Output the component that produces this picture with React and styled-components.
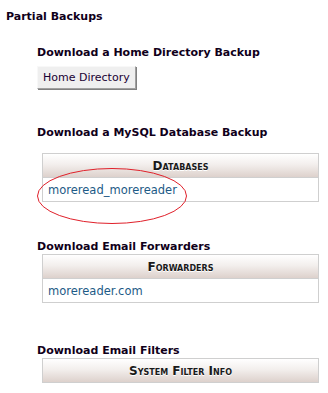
import React from "react";
import styled, { createGlobalStyle } from "styled-components";

const GlobalStyle = createGlobalStyle`
  body {
    margin: 0;
    background: #fff;
    font-family: "DejaVu Sans", Verdana, sans-serif;
    font-size: 11px;
    color: #111;
  }
`;

const Page = styled.div`
  position: relative;
  width: 328px;
  height: 393px;
  overflow: hidden;
  padding: 10px 6px 0;
  box-sizing: border-box;
`;

const Title = styled.h2`
  margin: 0;
  font-size: 11px;
  line-height: 13px;
  font-weight: bold;
  color: #10001a;
`;

const Section = styled.div`
  position: relative;
  margin-left: 31px;
  margin-top: ${(p) => p.$top}px;
`;

const Heading = styled.h3`
  margin: 0;
  font-size: 11px;
  line-height: 13px;
  font-weight: bold;
  color: #10001a;
`;

const Button = styled.button`
  margin-top: 7px;
  height: 23px;
  padding: 0 5px;
  font-family: "DejaVu Sans", Verdana, sans-serif;
  font-size: 11px;
  color: #1a0033;
  background: #efefef;
  border: 1px solid;
  border-color: #f8f8f8 #a0a0a0 #a0a0a0 #f8f8f8;
  box-shadow: 1px 1px 0 #808080;
`;

const Table = styled.div`
  margin: ${(p) => p.$gap || 1}px 0 0 5px;
  width: 277px;
  border: 1px solid #cfcfcf;
  box-sizing: border-box;
`;

const Header = styled.div`
  height: 23px;
  display: flex;
  align-items: center;
  justify-content: center;
  background: linear-gradient(#ffffff, #f3efed 45%, #ddd1cc);
  font-weight: bold;
  font-variant: small-caps;
  font-size: 12px;
  color: #1a1a1a;
  text-shadow: 0 1px 0 #fff;
`;

const Row = styled.div`
  height: 23px;
  display: flex;
  align-items: center;
  padding-left: 5px;
  border-top: 1px solid #cfcfcf;
`;

const Link = styled.a`
  color: #1d5a86;
  text-decoration: none;
  font-size: 11.5px;
`;

const Circle = styled.svg`
  position: absolute;
  left: -1px;
  top: 41px;
  pointer-events: none;
`;

export default function App() {
  return (
    <Page>
      <GlobalStyle />
      <Title>Partial Backups</Title>

      <Section $top={23}>
        <Heading>Download a Home Directory Backup</Heading>
        <Button type="button">Home Directory</Button>
      </Section>

      <Section $top={37}>
        <Heading>Download a MySQL Database Backup</Heading>
        <Table $gap={14}>
          <Header>Databases</Header>
          <Row>
            <Link href="#">moreread_morereader</Link>
          </Row>
        </Table>
        <Circle width="154" height="60" viewBox="0 0 154 60">
          <ellipse cx="76" cy="29" rx="74.5" ry="27.5" fill="none" stroke="#e0202a" strokeWidth="1" />
        </Circle>
      </Section>

      <Section $top={38}>
        <Heading>Download Email Forwarders</Heading>
        <Table>
          <Header>Forwarders</Header>
          <Row>
            <Link href="#">morereader.com</Link>
          </Row>
        </Table>
      </Section>

      <Section $top={41}>
        <Heading>Download Email Filters</Heading>
        <Table>
          <Header>System Filter Info</Header>
        </Table>
      </Section>
    </Page>
  );
}
